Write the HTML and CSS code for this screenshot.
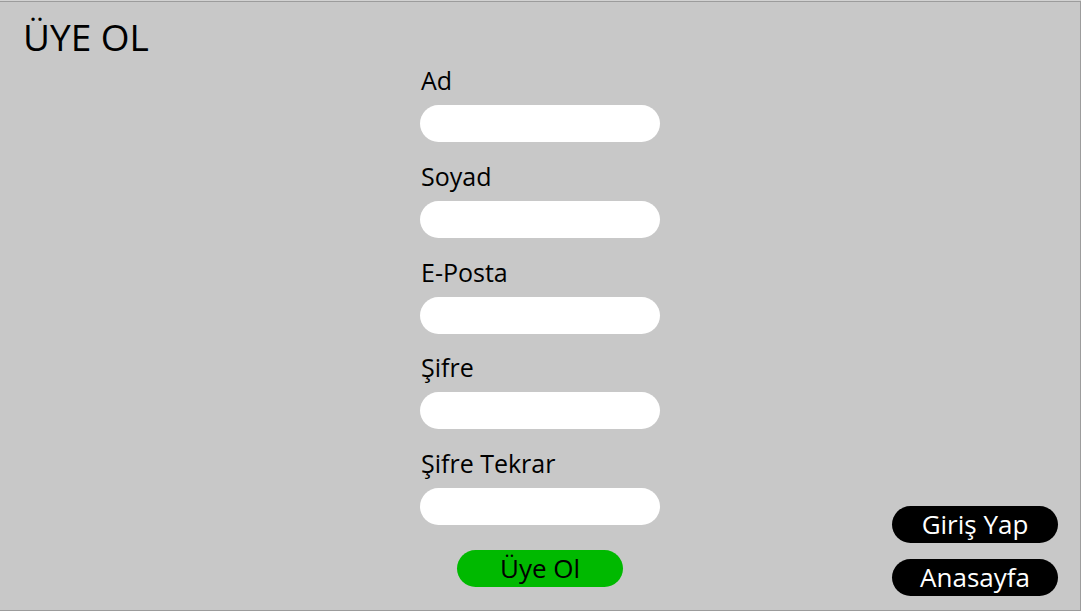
FILE: index.html
```html
<!DOCTYPE html>
<html lang="tr">
<head>
<meta charset="utf-8">
<title>Üye Ol</title>
<link rel="stylesheet" href="styles.css">
</head>
<body>
<div class="page">
  <h1 class="title">ÜYE OL</h1>
  <div class="main">
    <div class="spacer"></div>
    <form class="form">
      <label class="field"><span class="label">Ad</span><input class="input" type="text"></label>
      <label class="field"><span class="label">Soyad</span><input class="input" type="text"></label>
      <label class="field"><span class="label">E-Posta</span><input class="input" type="email"></label>
      <label class="field"><span class="label">Şifre</span><input class="input" type="password"></label>
      <label class="field"><span class="label">Şifre Tekrar</span><input class="input" type="password"></label>
      <button class="submit" type="button">Üye Ol</button>
    </form>
    <div class="side">
      <button class="pill" type="button">Giriş Yap</button>
      <button class="pill" type="button">Anasayfa</button>
    </div>
  </div>
</div>
</body>
</html>
```
FILE: styles.css
```css
* { box-sizing: border-box; }
html, body { margin: 0; padding: 0; background: #d2d2d2; }
body { font-family: "Open Sans", "Noto Sans", sans-serif; color: #000; }
.page {
  margin-top: 1px;
  height: 610px;
  background: #c8c8c8;
  border-top: 1px solid #9c9c9c;
  border-right: 1px solid #9c9c9c;
  border-bottom: 1px solid #9c9c9c;
  display: flex;
  flex-direction: column;
}
.title {
  margin: 0;
  padding: 13px 0 0 23px;
  font-size: 37px;
  font-weight: 400;
  line-height: 44px;
}
.main {
  flex: 1;
  padding-top: 6px;
  display: grid;
  grid-template-columns: 1fr 240px 1fr;
}
.form {
  display: flex;
  flex-direction: column;
  align-items: stretch;
}
.field {
  display: flex;
  flex-direction: column;
  height: 95.75px;
  flex: none;
}
.label {
  font-size: 25px;
  line-height: 30px;
  padding-left: 1px;
}
.input {
  margin-top: 10px;
  width: 240px;
  height: 37px;
  border: none;
  border-radius: 19px;
  background: #fff;
  outline: none;
}
.submit {
  align-self: center;
  margin-top: 6px;
  width: 166px;
  height: 37px;
  border: none;
  border-radius: 19px;
  background: #00b900;
  color: #000;
  font-family: inherit;
  font-size: 26px;
  line-height: 37px;
  padding: 0;
}
.side {
  display: flex;
  flex-direction: column;
  align-items: flex-end;
  justify-content: flex-end;
  gap: 16px;
  padding: 0 22px 14px 0;
}
.pill {
  width: 166px;
  height: 37px;
  border: none;
  border-radius: 19px;
  background: #000;
  color: #fff;
  font-family: inherit;
  font-size: 26px;
  line-height: 37px;
  padding: 0;
}
```
